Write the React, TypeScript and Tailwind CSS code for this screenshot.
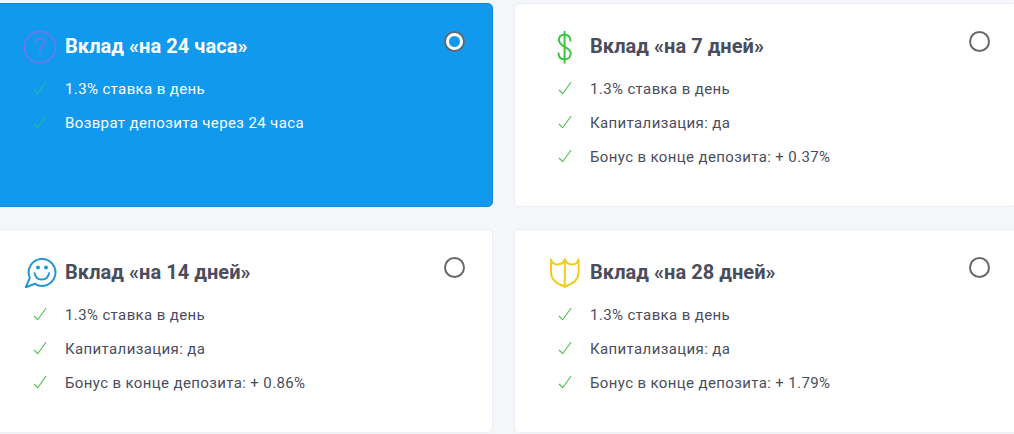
import React from 'react';
import clsx from 'clsx';

interface Plan {
  id: string;
  title: string;
  features: string[];
  icon: React.ReactNode;
}

const QuestionIcon = () => (
  <svg width="34" height="34" viewBox="0 0 34 34" fill="none" stroke="#6d7ae8" strokeWidth="1.6" strokeLinecap="round">
    <circle cx="17" cy="17.2" r="15.6" />
    <path d="M12.4 12.4C12.4 9.8 14.4 8.2 17 8.2s4.8 1.6 4.8 4.2c0 3.4-4.8 3.8-4.8 7.2v1" />
    <circle cx="17" cy="25" r="0.5" />
  </svg>
);

const DollarIcon = () => (
  <svg width="34" height="34" viewBox="0 0 34 34" fill="none" stroke="#3ec440" strokeWidth="2" strokeLinecap="round">
    <path d="M16.6 1.8v31" />
    <path d="M22.4 10.4C22.4 6.8 20 4.8 16.6 4.8s-5.7 2-5.7 5.2c0 7.4 11.8 6.2 11.8 13.4 0 3.6-2.6 5.8-6.1 5.8-3.6 0-6.1-2.2-6.1-6" />
  </svg>
);

const SmileIcon = () => (
  <svg width="34" height="34" viewBox="0 0 34 34" fill="none" stroke="#2496d3" strokeWidth="2" strokeLinejoin="round" strokeLinecap="round">
    <path d="M12 27.8A13.4 13.4 0 1 0 6.8 21.8L2.8 31.2z" />
    <path d="M11.6 17.2c.6 4 3.4 6.400 7.200 6.400s6.600-2.400 7.200-6.400" />
    <circle cx="15" cy="11.4" r="1" fill="#2496d3" />
    <circle cx="23" cy="11.4" r="1" fill="#2496d3" />
  </svg>
);

const ShieldIcon = () => (
  <svg width="34" height="34" viewBox="0 0 34 34" fill="none" stroke="#f2cb1d" strokeWidth="2" strokeLinejoin="round" strokeLinecap="round">
    <path d="M3 3.4c.8 3.200 3.400 5 6.600 5s6.200-1.800 7.200-5c1 3.200 4 5 7.200 5s5.800-1.800 6.600-5v13.200c0 7-5.600 11.400-13.800 14.200C8.600 28 3 23.600 3 16.600z" />
    <path d="M16.8 3.400v27" />
  </svg>
);

const CheckIcon = ({ active }: { active: boolean }) => (
  <svg
    width="14"
    height="14"
    viewBox="0 0 14 14"
    fill="none"
    strokeWidth="1.1"
    className={active ? 'stroke-[#24b99a]' : 'stroke-[#4fbf50]'}
  >
    <path d="M1 8l3.700 3.700L13 0.200" />
  </svg>
);

const plans: Plan[] = [
  {
    id: 'day',
    title: 'Вклад «на 24 часа»',
    features: ['1.3% ставка в день', 'Возврат депозита через 24 часа'],
    icon: <QuestionIcon />,
  },
  {
    id: 'week',
    title: 'Вклад «на 7 дней»',
    features: ['1.3% ставка в день', 'Капитализация: да', 'Бонус в конце депозита: + 0.37%'],
    icon: <DollarIcon />,
  },
  {
    id: 'two-weeks',
    title: 'Вклад «на 14 дней»',
    features: ['1.3% ставка в день', 'Капитализация: да', 'Бонус в конце депозита: + 0.86%'],
    icon: <SmileIcon />,
  },
  {
    id: 'four-weeks',
    title: 'Вклад «на 28 дней»',
    features: ['1.3% ставка в день', 'Капитализация: да', 'Бонус в конце депозита: + 1.79%'],
    icon: <ShieldIcon />,
  },
];

const PlanCard = ({ plan, active, onSelect }: { plan: Plan; active: boolean; onSelect: () => void }) => (
  <div
    onClick={onSelect}
    className={clsx(
      'h-[204px] cursor-pointer rounded-[5px] border pt-[25px] pl-[33px] pr-[27px]',
      active ? 'border-[#168bdc] bg-[#1199ed] text-white' : 'border-[#e9eef4] bg-white text-[#4a4d5e]'
    )}
  >
    <div className="flex h-[34px] items-start">
      <div className="mt-px h-[34px] w-[34px] shrink-0">{plan.icon}</div>
      <h3 className="ml-2 grow text-[20px] leading-[34px] font-bold tracking-[0.06px]">{plan.title}</h3>
      <button
        role="radio"
        aria-checked={active}
        aria-label={plan.title}
        className="mt-0.5 flex h-[21px] w-[21px] shrink-0 items-center justify-center rounded-full border-2 border-[#66676b]"
      >
        {active && <span className="h-[17px] w-[17px] rounded-full border-[3px] border-white" />}
      </button>
    </div>
    <ul className="mt-[9px]">
      {plan.features.map((feature) => (
        <li key={feature} className="flex h-[34px] items-center text-[15px] tracking-[0.375px]">
          <span className="ml-2.5 w-8 shrink-0">
            <CheckIcon active={active} />
          </span>
          {feature}
        </li>
      ))}
    </ul>
  </div>
);

export default function App() {
  const [selected, setSelected] = React.useState('day');

  return (
    <div className="h-[434px] overflow-hidden bg-[#f4f6fa] pt-[3px] font-[Roboto,sans-serif]">
      <div role="radiogroup" className="-ml-[11px] grid w-[1029px] grid-cols-2 gap-x-[21px] gap-y-[22px]">
        {plans.map((plan) => (
          <PlanCard key={plan.id} plan={plan} active={plan.id === selected} onSelect={() => setSelected(plan.id)} />
        ))}
      </div>
    </div>
  );
}
